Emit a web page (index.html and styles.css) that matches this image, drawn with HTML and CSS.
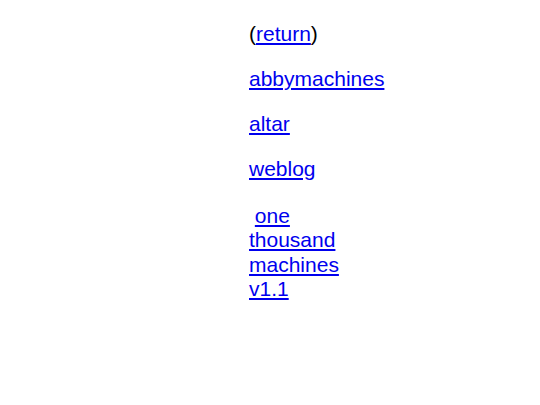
FILE: index.html
```html
<!DOCTYPE html>
<html>
<head>
<meta charset="utf-8">
<link rel="stylesheet" href="styles.css">
</head>
<body>
<div class="nav">
<p class="item">(<a href="#">return</a>)</p>
<p class="item"><a href="#">abbymachines</a></p>
<p class="item"><a href="#">altar</a></p>
<p class="item"><a href="#">weblog</a></p>
<p class="item item-last">&nbsp;<a href="#">one<br>thousand<br>machines<br>v1.1</a></p>
</div>
</body>
</html>
```
FILE: styles.css
```css
html, body {
  margin: 0;
  padding: 0;
  background: #ffffff;
}
body {
  font-family: "Liberation Sans", Arial, sans-serif;
  font-size: 21px;
  line-height: 24.5px;
  color: #000000;
}
.nav {
  padding-left: 249px;
  padding-top: 22px;
}
.item {
  margin: 0 0 20.5px 0;
}
.item-last {
  padding-top: 1.5px;
}
a {
  color: #0000ee;
  text-decoration: underline;
}
```
